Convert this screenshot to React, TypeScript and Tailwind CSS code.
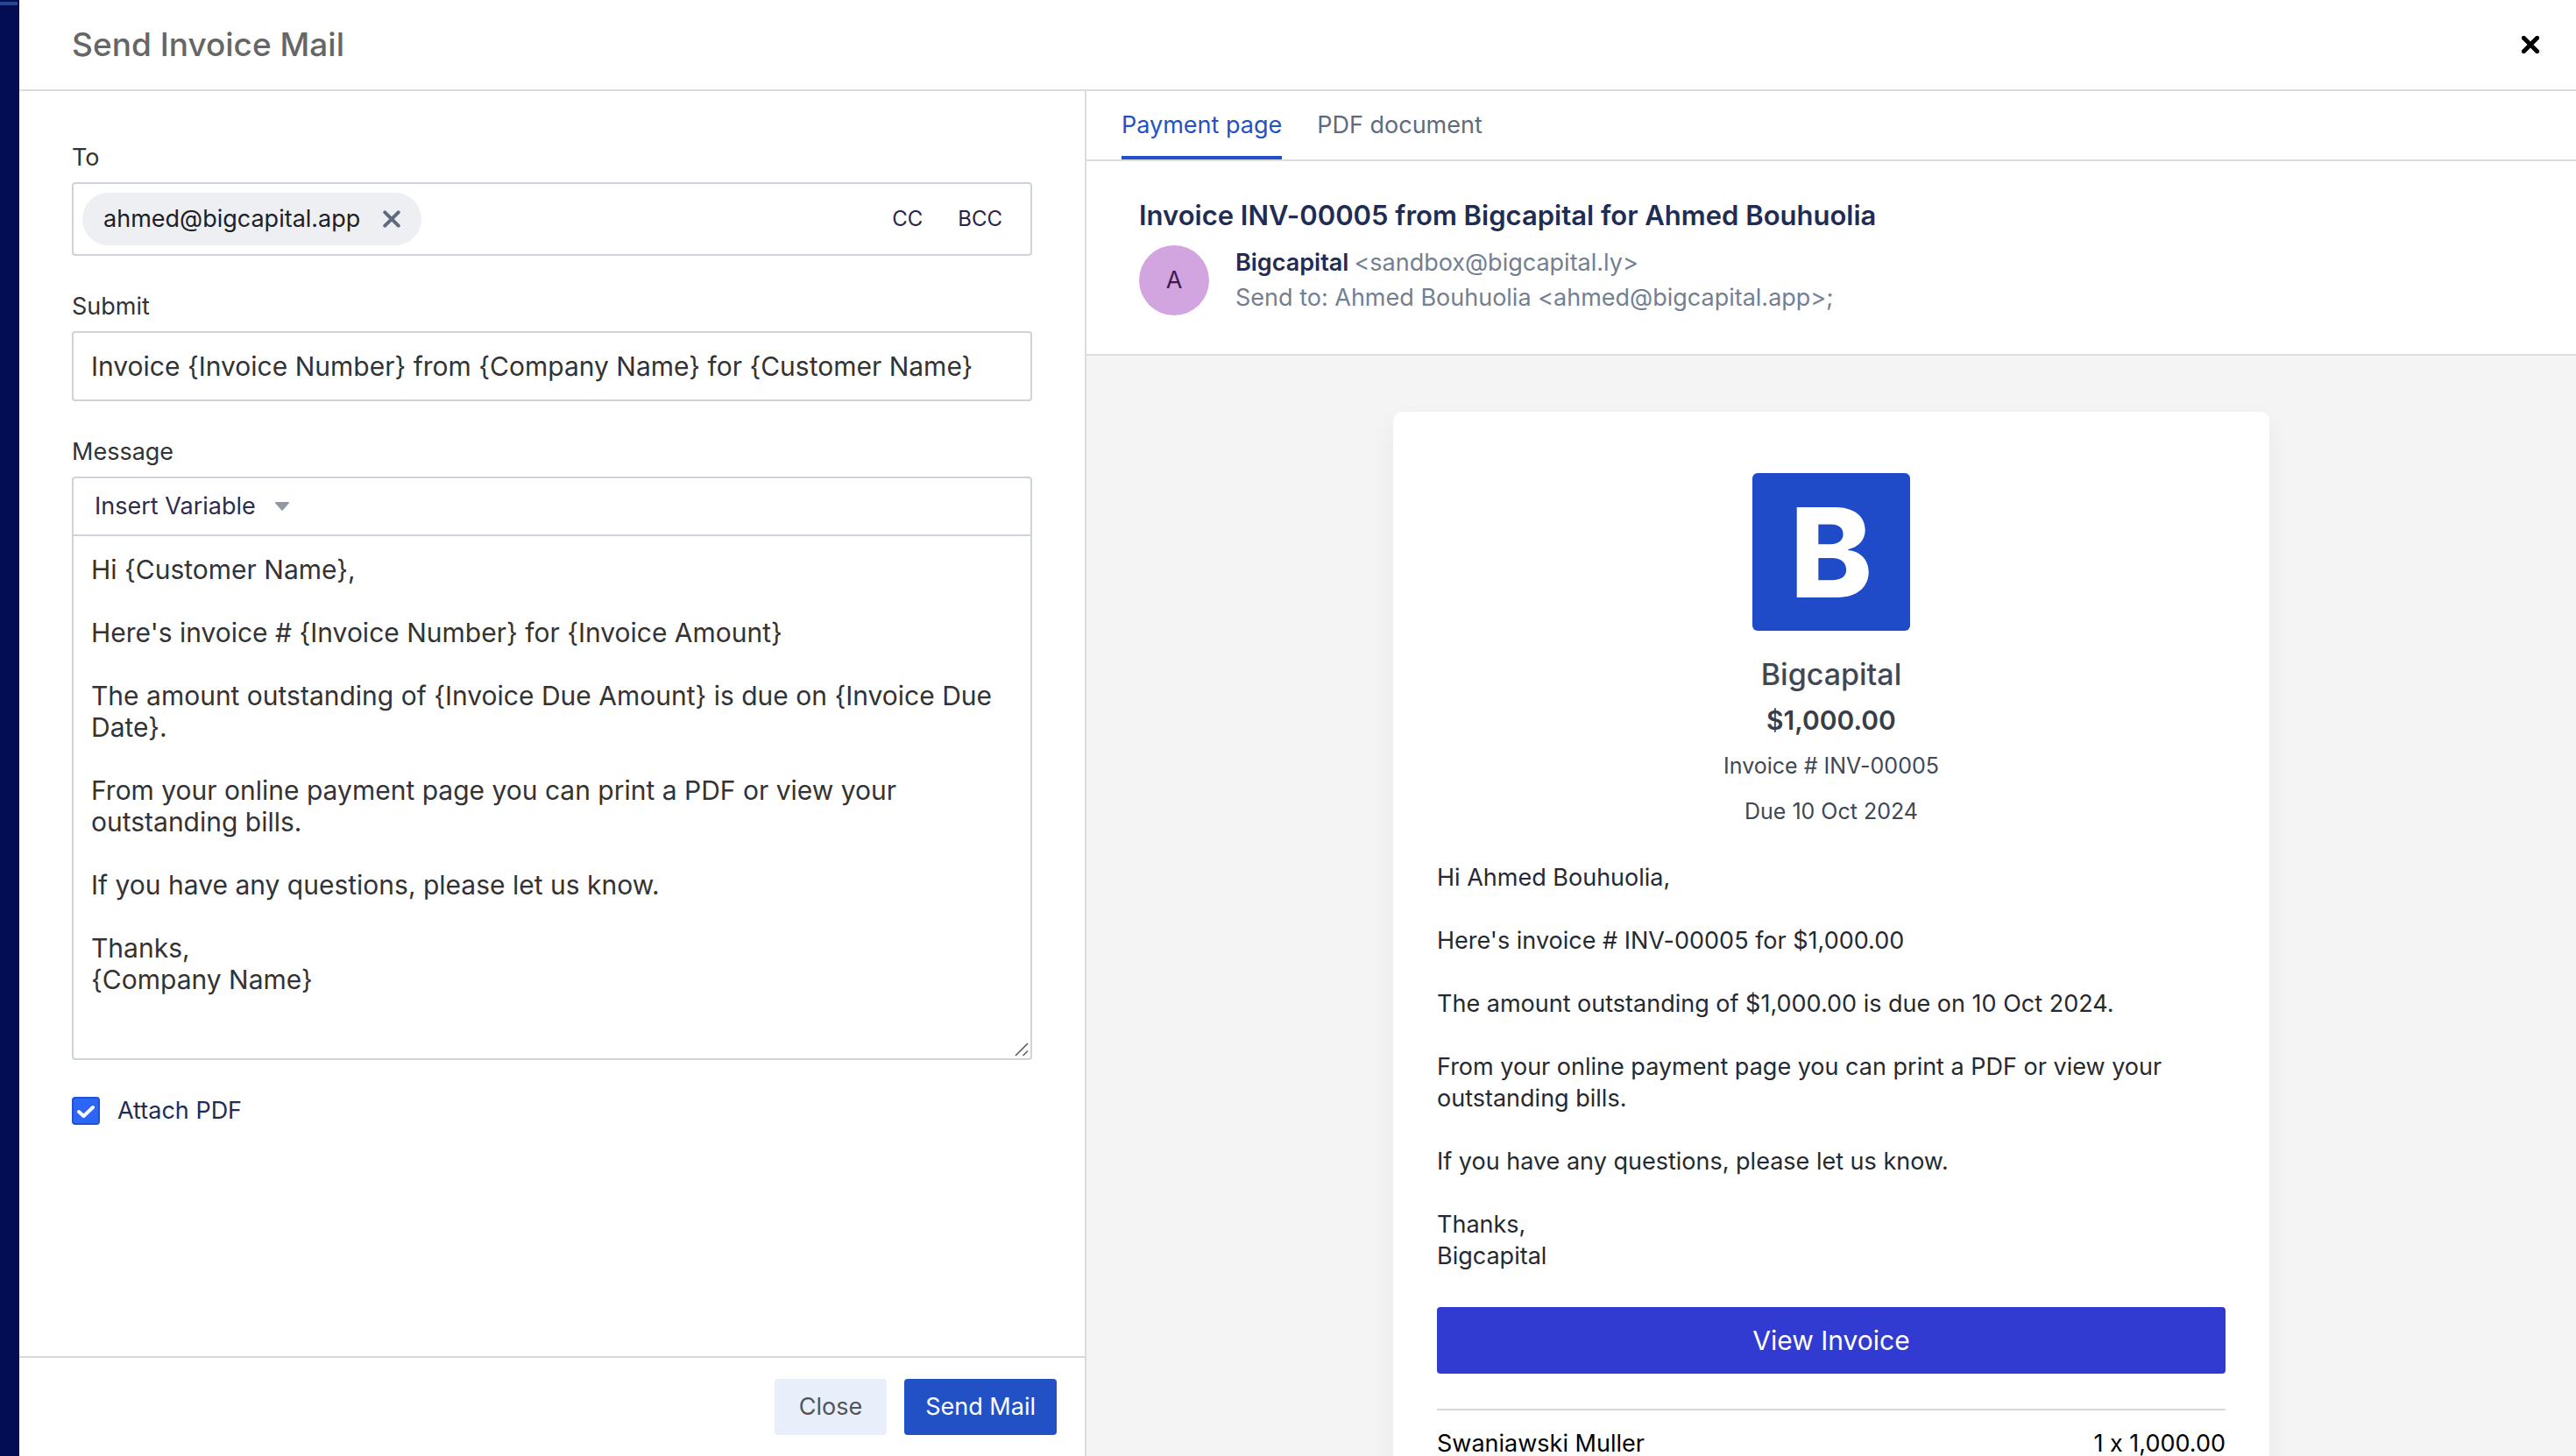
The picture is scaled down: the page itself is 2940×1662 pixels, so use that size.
import { useState } from 'react';
import type { ReactNode } from 'react';

const MESSAGE_TEMPLATE = `Hi {Customer Name},

Here's invoice # {Invoice Number} for {Invoice Amount}

The amount outstanding of {Invoice Due Amount} is due on {Invoice Due Date}.

From your online payment page you can print a PDF or view your outstanding bills.

If you have any questions, please let us know.

Thanks,
{Company Name}`;

const MESSAGE_PREVIEW = `Hi Ahmed Bouhuolia,

Here's invoice # INV-00005 for $1,000.00

The amount outstanding of $1,000.00 is due on 10 Oct 2024.

From your online payment page you can print a PDF or view your outstanding bills.

If you have any questions, please let us know.

Thanks,
Bigcapital`;

function CrossIcon({ strokeWidth }: { strokeWidth: number }) {
  return (
    <svg viewBox="0 0 20 20" className="size-5" fill="none" stroke="currentColor" strokeWidth={strokeWidth} strokeLinecap="round" aria-hidden="true">
      <path d="M2.3 2.3 17.7 17.7M17.7 2.3 2.3 17.7" />
    </svg>
  );
}

function CaretIcon() {
  return (
    <svg viewBox="0 0 16 10" className="h-2.5 w-4 text-[#8f99a8]" fill="currentColor" aria-hidden="true">
      <path d="M1 0h14c.9 0 1.3 1 .7 1.6l-7 7.9a1 1 0 0 1-1.4 0l-7-7.9C-.3 1 .1 0 1 0z" />
    </svg>
  );
}

function Field({ id, label, children }: { id: string; label: string; children: ReactNode }) {
  return (
    <div className="flex flex-col gap-2.5">
      <label htmlFor={id} className="self-start text-[27px] leading-9 text-[#333]">
        {label}
      </label>
      {children}
    </div>
  );
}

function ComposeForm() {
  const [subject, setSubject] = useState('Invoice {Invoice Number} from {Company Name} for {Customer Name}');
  const [message, setMessage] = useState(MESSAGE_TEMPLATE);
  const [attach, setAttach] = useState(true);

  return (
    <form className="flex min-w-0 flex-col border-r-2 border-[#dcdcdd]" onSubmit={(e) => e.preventDefault()}>
      <div className="flex min-h-0 flex-1 flex-col gap-10 px-[60px] pt-[58px]">
        <Field id="to" label="To">
          <div className="flex h-[84px] items-center rounded-sm border-2 border-[#ced3d9] pr-8 pl-2.5">
            <span className="flex h-[60px] items-center gap-[26px] rounded-full bg-[#eeeff2] px-6 text-[27px] leading-9 text-[#1c2127]">
              ahmed@bigcapital.app
              <button type="button" aria-label="Remove recipient" className="text-[#5f6b7c]">
                <CrossIcon strokeWidth={4} />
              </button>
            </span>
            <input id="to" className="min-w-0 flex-1 px-2 text-[27px] outline-none" />
            <div className="flex gap-10 text-2xl text-[#2c2445]">
              <button type="button">CC</button>
              <button type="button">BCC</button>
            </div>
          </div>
        </Field>

        <Field id="subject" label="Submit">
          <input
            id="subject"
            value={subject}
            onChange={(e) => setSubject(e.target.value)}
            className="h-20 w-full rounded-sm border-2 border-[#ced3d9] px-5 text-[30px] leading-9 text-[#333] outline-none"
          />
        </Field>

        <Field id="message" label="Message">
          <div className="relative flex flex-col rounded border-2 border-[#ced3d9]">
            <div className="flex h-[66px] border-b-2 border-[#ced3d9] px-6">
              <button type="button" aria-haspopup="menu" className="flex items-center gap-[22px] text-[27px] leading-9 text-[#2f2b4b]">
                Insert Variable
                <CaretIcon />
              </button>
            </div>
            <textarea
              id="message"
              value={message}
              onChange={(e) => setMessage(e.target.value)}
              className="h-[596px] w-full resize-none overflow-hidden px-5 pt-5 text-[30px] leading-9 text-[#333] outline-none"
            />
            <svg viewBox="0 0 16 16" className="absolute right-0.5 bottom-0.5 size-4" stroke="#555" strokeWidth="1.5" aria-hidden="true">
              <path d="M1 15 15 1M9.500 15 15 9.500" />
            </svg>
          </div>
        </Field>

        <label className="flex items-center gap-5 self-start text-[27px] leading-9 text-[#1f2d54]">
          <span className="grid">
            <input
              type="checkbox"
              checked={attach}
              onChange={(e) => setAttach(e.target.checked)}
              className="col-start-1 row-start-1 size-8 appearance-none rounded-sm border-2 border-[#ced3d9] checked:border-[#2053cf] checked:bg-[#2d66f6]"
            />
            {attach && (
              <svg viewBox="0 0 32 32" className="pointer-events-none col-start-1 row-start-1 size-8" fill="none" stroke="#fff" strokeWidth="4" strokeLinecap="round" strokeLinejoin="round" aria-hidden="true">
                <path d="M8 17l5.500 5L24 12" />
              </svg>
            )}
          </span>
          Attach PDF
        </label>
      </div>

      <footer className="flex justify-end gap-5 border-t-2 border-[#d8d8d9] px-8 py-6">
        <button type="button" className="h-16 rounded-sm bg-[#e8eefa] px-7 text-[27px] text-[#555]">
          Close
        </button>
        <button type="submit" className="h-16 rounded-sm bg-[#2251c5] px-6 text-[27px] text-white">
          Send Mail
        </button>
      </footer>
    </form>
  );
}

function Preview() {
  return (
    <section className="flex min-w-0 flex-col overflow-hidden">
      <div role="tablist" className="flex h-20 shrink-0 gap-10 border-b-2 border-[#dcdcdd] px-10 text-[27px]">
        <button type="button" role="tab" aria-selected="true" className="border-b-4 border-[#2251c5] pt-1 text-[#2251c5]">
          Payment page
        </button>
        <button type="button" role="tab" aria-selected="false" className="border-b-4 border-transparent pt-1 text-[#5f6b7c]">
          PDF document
        </button>
      </div>

      <header className="border-b-2 border-[#dcdcdd] px-[60px] pt-[42px] pb-11">
        <h2 className="text-[31px] leading-10 font-semibold text-[#1f2d54]">Invoice INV-00005 from Bigcapital for Ahmed Bouhuolia</h2>
        <div className="mt-3.5 flex gap-[30px]">
          <div className="grid size-20 place-items-center rounded-full bg-[#d2a4e0] text-[27px] text-[#3f1a50]">A</div>
          <div className="text-[27px] leading-10 text-[#738091]">
            <p className="flex gap-1.5">
              <strong className="font-semibold text-[#1f2d54]">Bigcapital</strong>
              <span>&lt;sandbox@bigcapital.ly&gt;</span>
            </p>
            <p>Send to: Ahmed Bouhuolia &lt;ahmed@bigcapital.app&gt;;</p>
          </div>
        </div>
      </header>

      <div className="min-h-0 flex-1 overflow-hidden bg-[#f4f4f4] pt-16">
        <article className="mx-auto w-full max-w-[1000px] rounded-[10px] bg-white px-[50px] pt-[70px] pb-16 shadow-[0_12px_30px_rgba(0,0,0,0.05)]">
          <div className="flex flex-col items-center text-[#404854]">
            <div className="mb-6 grid size-[180px] place-items-center rounded-md bg-[#1f4bc8] text-[142px] leading-none font-extrabold text-white">B</div>
            <h3 className="text-[34px] leading-[52px] font-medium">Bigcapital</h3>
            <p className="text-[30px] leading-[52px] font-semibold text-[#383e47]">$1,000.00</p>
            <p className="text-[25px] leading-[52px]">Invoice # INV-00005</p>
            <p className="text-[25px] leading-[52px]">Due 10 Oct 2024</p>
          </div>

          <p className="mt-8 text-[27px] leading-9 whitespace-pre-line text-[#252a31]">{MESSAGE_PREVIEW}</p>

          <button type="button" className="mt-10 h-[76px] w-full rounded-sm bg-[#313bd2] text-[30px] text-white">
            View Invoice
          </button>

          <div className="mt-10 flex justify-between border-t-2 border-[#d8d8d9] pt-5 text-[27px] leading-9 text-black">
            <span>Swaniawski Muller</span>
            <span>1 x 1,000.00</span>
          </div>
        </article>
      </div>
    </section>
  );
}

export default function App() {
  return (
    <div className="flex h-screen overflow-hidden bg-white font-['Inter',sans-serif] [font-variant-ligatures:no-contextual]">
      <div className="w-[22px] shrink-0 bg-[#020d54] pt-0.5">
        <div className="h-1 w-5 bg-[#264796]" />
      </div>
      <main className="flex min-w-0 flex-1 flex-col">
        <header className="flex h-[104px] shrink-0 items-center justify-between border-b-2 border-[#dcdcdd] pr-8 pl-[60px]">
          <h1 className="text-[37px] font-medium text-[#666]">Send Invoice Mail</h1>
          <button type="button" aria-label="Close" className="grid size-10 place-items-center text-black">
            <CrossIcon strokeWidth={5} />
          </button>
        </header>
        <div className="grid min-h-0 flex-1 grid-cols-[1218fr_1700fr]">
          <ComposeForm />
          <Preview />
        </div>
      </main>
    </div>
  );
}
